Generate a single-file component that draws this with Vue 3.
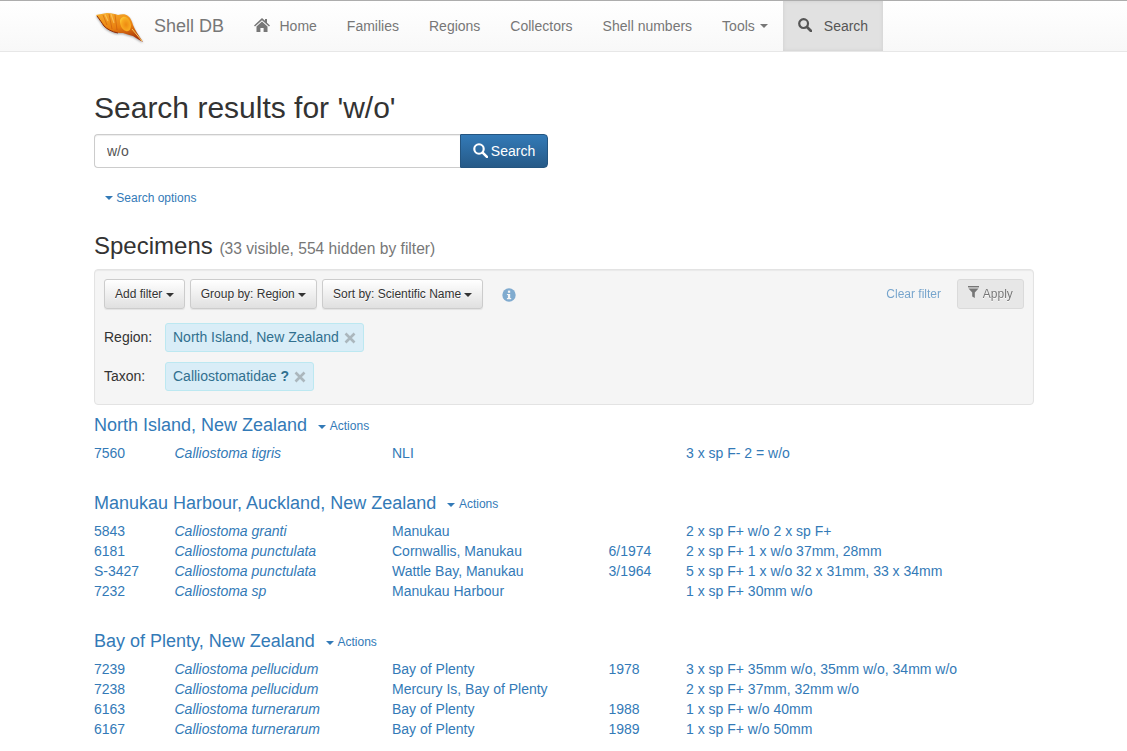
<script setup>
const navLinks = ['Families', 'Regions', 'Collectors', 'Shell numbers']

const groups = [
  {
    name: 'North Island, New Zealand',
    rows: [
      ['7560', 'Calliostoma tigris', 'NLI', '', '3 x sp F- 2 = w/o']
    ]
  },
  {
    name: 'Manukau Harbour, Auckland, New Zealand',
    rows: [
      ['5843', 'Calliostoma granti', 'Manukau', '', '2 x sp F+ w/o 2 x sp F+'],
      ['6181', 'Calliostoma punctulata', 'Cornwallis, Manukau', '6/1974', '2 x sp F+ 1 x w/o 37mm, 28mm'],
      ['S-3427', 'Calliostoma punctulata', 'Wattle Bay, Manukau', '3/1964', '5 x sp F+ 1 x w/o 32 x 31mm, 33 x 34mm'],
      ['7232', 'Calliostoma sp', 'Manukau Harbour', '', '1 x sp F+ 30mm w/o']
    ]
  },
  {
    name: 'Bay of Plenty, New Zealand',
    rows: [
      ['7239', 'Calliostoma pellucidum', 'Bay of Plenty', '1978', '3 x sp F+ 35mm w/o, 35mm w/o, 34mm w/o'],
      ['7238', 'Calliostoma pellucidum', 'Mercury Is, Bay of Plenty', '', '2 x sp F+ 37mm, 32mm w/o'],
      ['6163', 'Calliostoma turnerarum', 'Bay of Plenty', '1988', '1 x sp F+ w/o 40mm'],
      ['6167', 'Calliostoma turnerarum', 'Bay of Plenty', '1989', '1 x sp F+ w/o 50mm']
    ]
  }
]
</script>

<template>
  <nav class="navbar">
    <div class="container nav-inner">
      <a class="brand">
        <svg class="logo" width="50" height="34" viewBox="0 0 50 34">
          <defs>
            <linearGradient id="shellFill" x1="0.15" y1="0" x2="0.5" y2="1">
              <stop offset="0" stop-color="#f7ac2a" />
              <stop offset="0.55" stop-color="#e97f10" />
              <stop offset="1" stop-color="#a8340a" />
            </linearGradient>
            <radialGradient id="shellMouth" cx="0.55" cy="0.55" r="0.6">
              <stop offset="0" stop-color="#ee8a12" />
              <stop offset="0.7" stop-color="#f8ab20" />
              <stop offset="1" stop-color="#fcc733" />
            </radialGradient>
          </defs>
          <path d="M2 6 L13 4 C18 4 21 5 24 6 C28 5 32 5 34 7 C37 9 38 13 39 16 C41 21 45 27 49 33 C45 31 42 29 39 27 C35 26 32 25 29 24 C25 24 21 24 18 22 C14 21 11 19 9 16 C7 12 4 9 2 6 Z" fill="url(#shellFill)" />
          <path d="M29 8 C33 7 36 11 37 16 C37 20 35 23 32 22 C28 21 26 16 26 12 C26 10 27 9 29 8 Z" fill="url(#shellMouth)" />
          <path d="M9 6 L13 16 M15 5 L18 20 M21 5.5 L23 21" stroke="#bf4c0c" stroke-width="0.8" stroke-opacity="0.6" fill="none" />
          <path d="M11 5.5 L14 12 M17 5 L20 14" stroke="#fbcb6a" stroke-width="1.2" stroke-opacity="0.7" fill="none" />
          <path d="M3 7 C6 11 8 14 10 17 C13 20 18 23 24 24" stroke="#8e2a08" stroke-width="1" fill="none" />
          <path d="M38 20 L48 32" stroke="#f8c85a" stroke-width="1" />
        </svg>
        <span>Shell DB</span>
      </a>
      <a class="nav-link">
        <svg class="nav-icon" width="16" height="14" viewBox="0 0 16 14">
          <path d="M8 0 L11 2.8 V1 H13 V4.7 L16 7.5 L15 8.5 L8 2.2 L1 8.5 L0 7.5 Z M2.5 8.5 L8 3.6 L13.5 8.5 V14 H9.6 V10 H6.4 V14 H2.5 Z" fill="#777" />
        </svg>
        Home
      </a>
      <a v-for="link in navLinks" :key="link" class="nav-link">{{ link }}</a>
      <a class="nav-link">Tools<span class="caret nav-caret"></span></a>
      <a class="nav-link active">
        <svg class="search-icon" width="14" height="14" viewBox="0 0 14 14">
          <circle cx="5.6" cy="5.6" r="4.4" fill="none" stroke="#555" stroke-width="2.2" />
          <path d="M9 9 L13 13" stroke="#555" stroke-width="2.6" stroke-linecap="round" />
        </svg>
        Search
      </a>
    </div>
  </nav>

  <main class="container">
    <h1>Search results for 'w/o'</h1>

    <form class="search-bar" @submit.prevent>
      <input class="search-input" type="text" value="w/o" />
      <button class="search-btn">
        <svg width="15" height="15" viewBox="0 0 14 14">
          <circle cx="5.6" cy="5.6" r="4.4" fill="none" stroke="#fff" stroke-width="2" />
          <path d="M9 9 L13 13" stroke="#fff" stroke-width="2.4" stroke-linecap="round" />
        </svg>
        Search
      </button>
    </form>

    <a class="options-link"><span class="caret"></span> Search options</a>

    <h2>Specimens <small>(33 visible, 554 hidden by filter)</small></h2>

    <section class="well">
      <div class="toolbar">
        <button class="btn">Add filter <span class="caret dark"></span></button>
        <button class="btn">Group by: Region <span class="caret dark"></span></button>
        <button class="btn">Sort by: Scientific Name <span class="caret dark"></span></button>
        <svg class="info" width="14" height="14" viewBox="0 0 14 14">
          <circle cx="7" cy="7" r="6.7" fill="#337ab7" />
          <rect x="5.9" y="2.6" width="2.3" height="2.2" fill="#f5f5f5" />
          <path d="M4.9 5.9 H8.2 V10 H9.2 V11.2 H4.9 V10 H5.9 V7.1 H4.9 Z" fill="#f5f5f5" />
        </svg>
        <a class="clear">Clear filter</a>
        <button class="btn apply">
          <svg class="funnel" width="11" height="12" viewBox="0 0 11 12">
            <rect x="0" y="0" width="11" height="1.4" fill="#333" />
            <path d="M0.5 2.6 H10.5 L6.8 6.6 V12 L4.2 10.4 V6.6 Z" fill="#333" />
          </svg>
          Apply
        </button>
      </div>
      <div class="filter-row">
        <span class="filter-label">Region:</span>
        <span class="tag">
          North Island, New Zealand
          <svg class="tag-x" width="12" height="12" viewBox="0 0 12 12">
            <path d="M1.5 1.5 L10.5 10.5 M10.5 1.5 L1.5 10.5" stroke="#abb7bd" stroke-width="2.6" />
          </svg>
        </span>
      </div>
      <div class="filter-row last">
        <span class="filter-label">Taxon:</span>
        <span class="tag">
          Calliostomatidae
          <b class="tag-q">?</b>
          <svg class="tag-x" width="12" height="12" viewBox="0 0 12 12">
            <path d="M1.5 1.5 L10.5 10.5 M10.5 1.5 L1.5 10.5" stroke="#abb7bd" stroke-width="2.6" />
          </svg>
        </span>
      </div>
    </section>

    <section v-for="group in groups" :key="group.name" class="group">
      <div class="group-head">
        <a class="group-name">{{ group.name }}</a>
        <a class="actions"><span class="caret action-caret"></span> Actions</a>
      </div>
      <a v-for="row in group.rows" :key="row[0]" class="row">
        <span>{{ row[0] }}</span>
        <em>{{ row[1] }}</em>
        <span>{{ row[2] }}</span>
        <span>{{ row[3] }}</span>
        <span>{{ row[4] }}</span>
      </a>
    </section>
  </main>
</template>

<style>
html, body {
  margin: 0;
  background: #fff;
}
</style>

<style scoped>
* { box-sizing: border-box; }

.container {
  width: 940px;
  margin-left: 94px;
  font-family: "Liberation Sans", Arial, sans-serif;
  font-size: 14px;
  line-height: 20px;
  color: #333;
}
.navbar {
  height: 52px;
  border-top: 1px solid #adadad;
  border-bottom: 1px solid #e7e7e7;
  background: linear-gradient(to bottom, #fff, #f8f8f8);
}
.nav-inner {
  display: flex;
  height: 50px;
}
.brand {
  display: flex;
  align-items: center;
  width: 144.5px;
  font-size: 18px;
  color: #777;
}
.logo {
  margin-right: 10px;
  filter: drop-shadow(0 1px 1px rgba(0,0,0,0.35));
}
.nav-link {
  display: flex;
  align-items: center;
  padding: 0 15px;
  color: #777;
}
.nav-icon { margin-right: 10px; margin-top: -3px; }
.active {
  background: #e1e1e1;
  color: #555;
  box-shadow: inset 0 0 4px rgba(0,0,0,0.08);
}
.search-icon { margin-right: 11.5px; margin-top: -2px; }

h1 {
  margin: 36px 0 6px;
  font-size: 30px;
  font-weight: 400;
  line-height: 39.6px;
}
.search-bar {
  display: flex;
  width: 454px;
  height: 34px;
}
.search-input {
  flex: 1;
  min-width: 0;
  padding: 6px 12px;
  border: 1px solid #ccc;
  border-right: none;
  border-radius: 4px 0 0 4px;
  font: 14px/20px "Liberation Sans", Arial, sans-serif;
  color: #555;
  box-shadow: inset 0 1px 1px rgba(0,0,0,0.075);
}
.search-btn {
  display: flex;
  align-items: center;
  justify-content: center;
  gap: 3px;
  width: 88px;
  border: 1px solid #245580;
  border-radius: 0 4px 4px 0;
  background: linear-gradient(to bottom, #337ab7, #265a88);
  color: #fff;
  font: 14px/20px "Liberation Sans", Arial, sans-serif;
}
.options-link {
  display: block;
  margin: 20px 0 0 11px;
  font-size: 12px;
  color: #337ab7;
}
.caret {
  display: inline-block;
  width: 0;
  height: 0;
  vertical-align: middle;
  border-top: 4px solid #337ab7;
  border-left: 4px solid transparent;
  border-right: 4px solid transparent;
}
.caret.dark { border-top-color: #333; }
.caret.nav-caret {
  margin-left: 5.5px;
  border-top-color: #777;
}
.caret.action-caret { margin-right: 1px; }

h2 {
  margin: 25px 0 10px;
  font-size: 24px;
  font-weight: 400;
  line-height: 26.4px;
}
h2 small {
  font-size: 15.6px;
  line-height: 1;
  color: #777;
}

.well {
  height: 136px;
  margin-bottom: 10px;
  padding: 9px;
  border: 1px solid #e3e3e3;
  border-radius: 4px;
  background: #f5f5f5;
  box-shadow: inset 0 1px 1px rgba(0,0,0,0.05);
}
.toolbar {
  display: flex;
  align-items: center;
  gap: 5px;
}
.btn {
  height: 30px;
  padding: 5px 10px;
  border: 1px solid #ccc;
  border-radius: 3px;
  background: linear-gradient(to bottom, #fff, #e0e0e0);
  color: #333;
  font: 12px/18px "Liberation Sans", Arial, sans-serif;
  text-shadow: 0 1px 0 #fff;
  box-shadow: inset 0 1px 0 rgba(255,255,255,0.15), 0 1px 1px rgba(0,0,0,0.075);
}
.info {
  margin: 2px 0 0 14px;
  opacity: 0.6;
}
.clear {
  margin-left: auto;
  margin-right: 11px;
  font-size: 12px;
  color: #337ab7;
  opacity: 0.65;
}
.apply {
  opacity: 0.65;
  background: #e0e0e0;
  box-shadow: none;
  width: 67px;
  padding: 5px 0;
}
.funnel { margin-right: 1px; }
.filter-row {
  display: flex;
  align-items: center;
  height: 29px;
  margin-top: 14px;
}
.filter-row.last { margin-top: 10px; }
.filter-label { width: 61px; margin-bottom: 1px; }
.tag {
  display: flex;
  align-items: center;
  height: 29px;
  padding: 0 7px 1px;
  border: 1px solid #bce8f1;
  border-radius: 3px;
  background: #d9edf7;
  color: #31708f;
}
.tag-x { margin: 2px 0 0 5px; }
.tag-q { margin-left: 4px; }

.group { margin-bottom: 30px; }
.group-head {
  display: flex;
  align-items: center;
  height: 20px;
  margin-bottom: 8px;
}
.group-name {
  font-size: 18px;
  color: #337ab7;
}
.actions {
  margin: 2px 0 0 11px;
  font-size: 12px;
  color: #337ab7;
}
.row {
  display: grid;
  grid-template-columns: 80.5px 217.5px 216.5px 77.5px 1fr;
  color: #337ab7;
}
</style>
